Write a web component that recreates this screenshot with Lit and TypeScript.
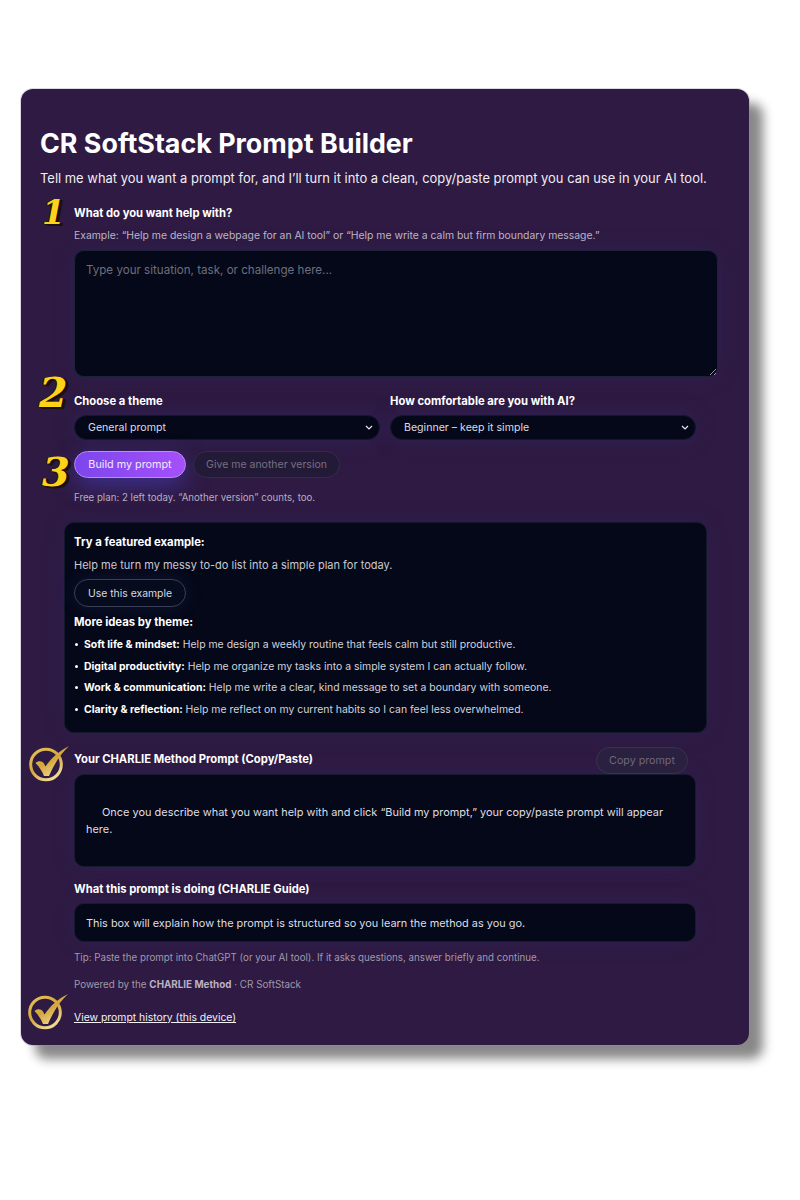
import { LitElement, html, css, svg } from "lit";
import { customElement } from "lit/decorators.js";

const check = () => html`<svg class="check" viewBox="0 0 46 38" width="46" height="38" aria-hidden="true">
  <defs>
    <linearGradient id="g" x1="0" y1="0" x2="0.6" y2="1">
      <stop offset="0" stop-color="#e8c558"/><stop offset=".55" stop-color="#d3a63c"/><stop offset="1" stop-color="#f0d890"/>
    </linearGradient>
  </defs>
  ${svg`<circle cx="18" cy="20.500" r="15.300" fill="#2e1a42" stroke="url(#g)" stroke-width="3"/>
  <path d="M7.500 19 C10 16.500 14 16.500 16 19.500 L17.500 22.500 C23 14 31 7 41 2 C33 9.500 27 18.500 21 32 L16 32 C14 27 11 22.500 7.500 19 Z" fill="url(#g)"/>`}
</svg>`;

const chevron = "url(\"data:image/svg+xml,%3Csvg xmlns='http://www.w3.org/2000/svg' width='8' height='5' viewBox='0 0 8 5'%3E%3Cpath d='M1 1l3 3 3-3' fill='none' stroke='%23e8e8ee' stroke-width='1.200'/%3E%3C/svg%3E\")";

@customElement("app-root")
export class AppRoot extends LitElement {
  static styles = css`
    :host { display: block; background: #fff; min-height: 1200px; padding-top: 89px; box-sizing: border-box;
      font-family: "Inter", "Open Sans", sans-serif; color: #fff; }
    .card { position: relative; box-sizing: border-box; width: 728px; height: 956px; margin-left: 21px; padding: 0 31px 0 19px;
      background: #2e1a42; border-radius: 12px;
      box-shadow: 0 0 0 1px rgba(150,145,165,.35), 14px 14px 11px rgba(0,0,0,.47); }
    h1 { margin: 0; padding-top: 39px; font-size: 26.85px; line-height: 30px; font-weight: 700; }
    .sub { margin: 10px 0 0; font-size: 12.95px; line-height: 20px; color: #f0edf3; white-space: nowrap; }
    .body { padding-left: 34px; }
    .step { position: absolute; font-family: "DejaVu Serif", serif; font-style: italic; font-weight: 700; color: #ffd21a;
      text-shadow: 1px 1px 0 #1a1208, 2px 1px 0 #1a1208, 3px 1px 0 #1a1208, 3px 2px 0 #1a1208, -1px 0 0 #1a1208; line-height: 1; }
    .s1 { left: 21px; top: 107px; font-size: 33px; }
    .s2 { left: 18px; top: 284px; font-size: 41px; }
    .s3 { left: 21px; top: 363px; font-size: 40px; }
    .mark { position: absolute; }
    .m1 { left: 7px; top: 654.500px; }
    .m2 { left: 5.500px; top: 903px; }
    label, .lbl { display: block; font-size: 11.25px; line-height: 14px; font-weight: 700; color: #fff; }
    .q { margin-top: 18px; }
    .hint { margin: 9px 0 0; font-size: 10.4px; line-height: 14px; color: #bcb3c6; white-space: nowrap; }
    textarea { display: block; box-sizing: border-box; width: 644px; height: 127px; margin-top: 7px; padding: 11px;
      background: #050818; color: #ddd; border: 1px solid #1c2238; border-radius: 10px; font: 11.6px/16px "Inter", sans-serif; outline: none;
      color-scheme: dark; box-shadow: 0 0 24px rgba(50,60,140,.18); }
    textarea::placeholder { color: #6d6f7c; }
    .selects { display: grid; grid-template-columns: 306px 306px; column-gap: 10px; margin-top: 17px; }
    select { display: block; width: 100%; height: 25px; margin-top: 7px; padding: 0 9px 0 13px; box-sizing: border-box; appearance: none;
      background: #050818 no-repeat right 6px center; color: #dcdce2; border: 1px solid #14182c; border-radius: 13px; font: 10.6px "Inter", sans-serif;
      box-shadow: 0 0 22px rgba(50,60,140,.25); }
    .actions { display: flex; gap: 7px; margin-top: 11px; }
    button { box-sizing: border-box; height: 27px; border-radius: 14px; font: 10.5px "Inter", sans-serif; padding: 0; }
    .primary { width: 112px; font-size: 10.8px; color: #f1e9ff; background: linear-gradient(90deg,#7c46ec,#a550fb); border: 1px solid #b98cff;
      box-shadow: 0 8px 22px rgba(80,70,220,.5); }
    .ghost { width: 147px; color: #77707f; background: #231a38; border: 1px solid #352b4b; }
    .free { margin: 13px 0 0; font-size: 9.7px; line-height: 14px; color: #b6adc0; }
    .box { box-sizing: border-box; margin: 17px 0 0 -10px; width: 643px; height: 211px; padding: 12px 9px; background: #050818;
      border: 1px solid #14182c; border-radius: 10px; box-shadow: 0 0 24px rgba(50,60,140,.15); }
    .box .lbl { line-height: 14px; font-size: 11.3px; }
    .box p { margin: 9px 0 0; font-size: 11px; line-height: 14px; color: #c9c9d1; }
    .use { display: block; width: 112px; height: 28px; margin-top: 7px; font-size: 10.4px; color: #d8d8e0; background: #070b1e; border: 1px solid #3a3f57;
      box-shadow: 0 0 18px rgba(70,80,170,.2); }
    .box .more { margin-top: 8px; }
    ul { list-style: none; margin: 9px 0 0; padding: 0; }
    li { position: relative; padding-left: 10px; font-size: 10.45px; line-height: 14px; color: #d2d2da; margin-bottom: 7.6px; white-space: nowrap; }
    li::before { content: ""; position: absolute; left: 1px; top: 5px; width: 3px; height: 3px; border-radius: 50%; background: #fff; }
    li b { color: #fff; font-weight: 700; }
    .head { display: flex; justify-content: space-between; align-items: flex-start; width: 614px; margin-top: 14px; }
    .head .lbl { margin-top: 5px; }
    .copy { width: 92px; height: 27px; font-size: 10.7px; color: #6f6879; background: #2a2040; border: 1px solid #3b3150; }
    .out { box-sizing: border-box; width: 622px; height: 93px; padding: 29px 11px 0; background: #050818; border: 1px solid #161b30; border-radius: 10px;
      font-size: 10.95px; line-height: 17px; color: #dedee4; text-indent: 16px; box-shadow: 0 0 22px rgba(50,60,140,.2); }
    .guide-l { margin-top: 15px; }
    .guide { box-sizing: border-box; width: 622px; height: 39px; margin-top: 7px; padding: 0 11px; display: flex; align-items: center;
      background: #050818; border: 1px solid #161b30; border-radius: 10px; font-size: 10.9px; color: #dedee4; box-shadow: 0 0 22px rgba(50,60,140,.2); }
    .tip { margin: 9px 0 0; font-size: 9.75px; line-height: 14px; color: #a199ab; }
    .pow { margin: 12px 0 0; font-size: 9.85px; line-height: 14px; color: #a199ab; }
    .pow b { font-weight: 700; color: #b9b1c3; }
    a { display: block; margin-top: 20px; font-size: 10.4px; line-height: 14px; color: #f2f0f5; text-decoration: underline; }
  `;

  render() {
    const arrow = `background-image:${chevron}`;
    return html`
      <div class="card">
        <h1>CR SoftStack Prompt Builder</h1>
        <p class="sub">Tell me what you want a prompt for, and I’ll turn it into a clean, copy/paste prompt you can use in your AI tool.</p>
        <span class="step s1">1</span>
        <span class="step s2">2</span>
        <span class="step s3">3</span>
        <div class="mark m1">${check()}</div>
        <div class="mark m2">${check()}</div>
        <div class="body">
          <label class="q">What do you want help with?</label>
          <p class="hint">Example: “Help me design a webpage for an AI tool” or “Help me write a calm but firm boundary message.”</p>
          <textarea placeholder="Type your situation, task, or challenge here..."></textarea>
          <div class="selects">
            <div><label>Choose a theme</label><select style=${arrow}><option>General prompt</option></select></div>
            <div><label>How comfortable are you with AI?</label><select style=${arrow}><option>Beginner – keep it simple</option></select></div>
          </div>
          <div class="actions"><button class="primary">Build my prompt</button><button class="ghost">Give me another version</button></div>
          <p class="free">Free plan: 2 left today. “Another version” counts, too.</p>
          <div class="box">
            <div class="lbl">Try a featured example:</div>
            <p>Help me turn my messy to-do list into a simple plan for today.</p>
            <button class="use">Use this example</button>
            <div class="lbl more">More ideas by theme:</div>
            <ul>
              <li><b>Soft life &amp; mindset:</b> Help me design a weekly routine that feels calm but still productive.</li>
              <li><b>Digital productivity:</b> Help me organize my tasks into a simple system I can actually follow.</li>
              <li><b>Work &amp; communication:</b> Help me write a clear, kind message to set a boundary with someone.</li>
              <li><b>Clarity &amp; reflection:</b> Help me reflect on my current habits so I can feel less overwhelmed.</li>
            </ul>
          </div>
          <div class="head"><div class="lbl">Your CHARLIE Method Prompt (Copy/Paste)</div><button class="copy">Copy prompt</button></div>
          <div class="out">Once you describe what you want help with and click “Build my prompt,” your copy/paste prompt will appear here.</div>
          <div class="lbl guide-l">What this prompt is doing (CHARLIE Guide)</div>
          <div class="guide">This box will explain how the prompt is structured so you learn the method as you go.</div>
          <p class="tip">Tip: Paste the prompt into ChatGPT (or your AI tool). If it asks questions, answer briefly and continue.</p>
          <p class="pow">Powered by the <b>CHARLIE Method</b> · CR SoftStack</p>
          <a href="#">View prompt history (this device)</a>
        </div>
      </div>`;
  }
}
